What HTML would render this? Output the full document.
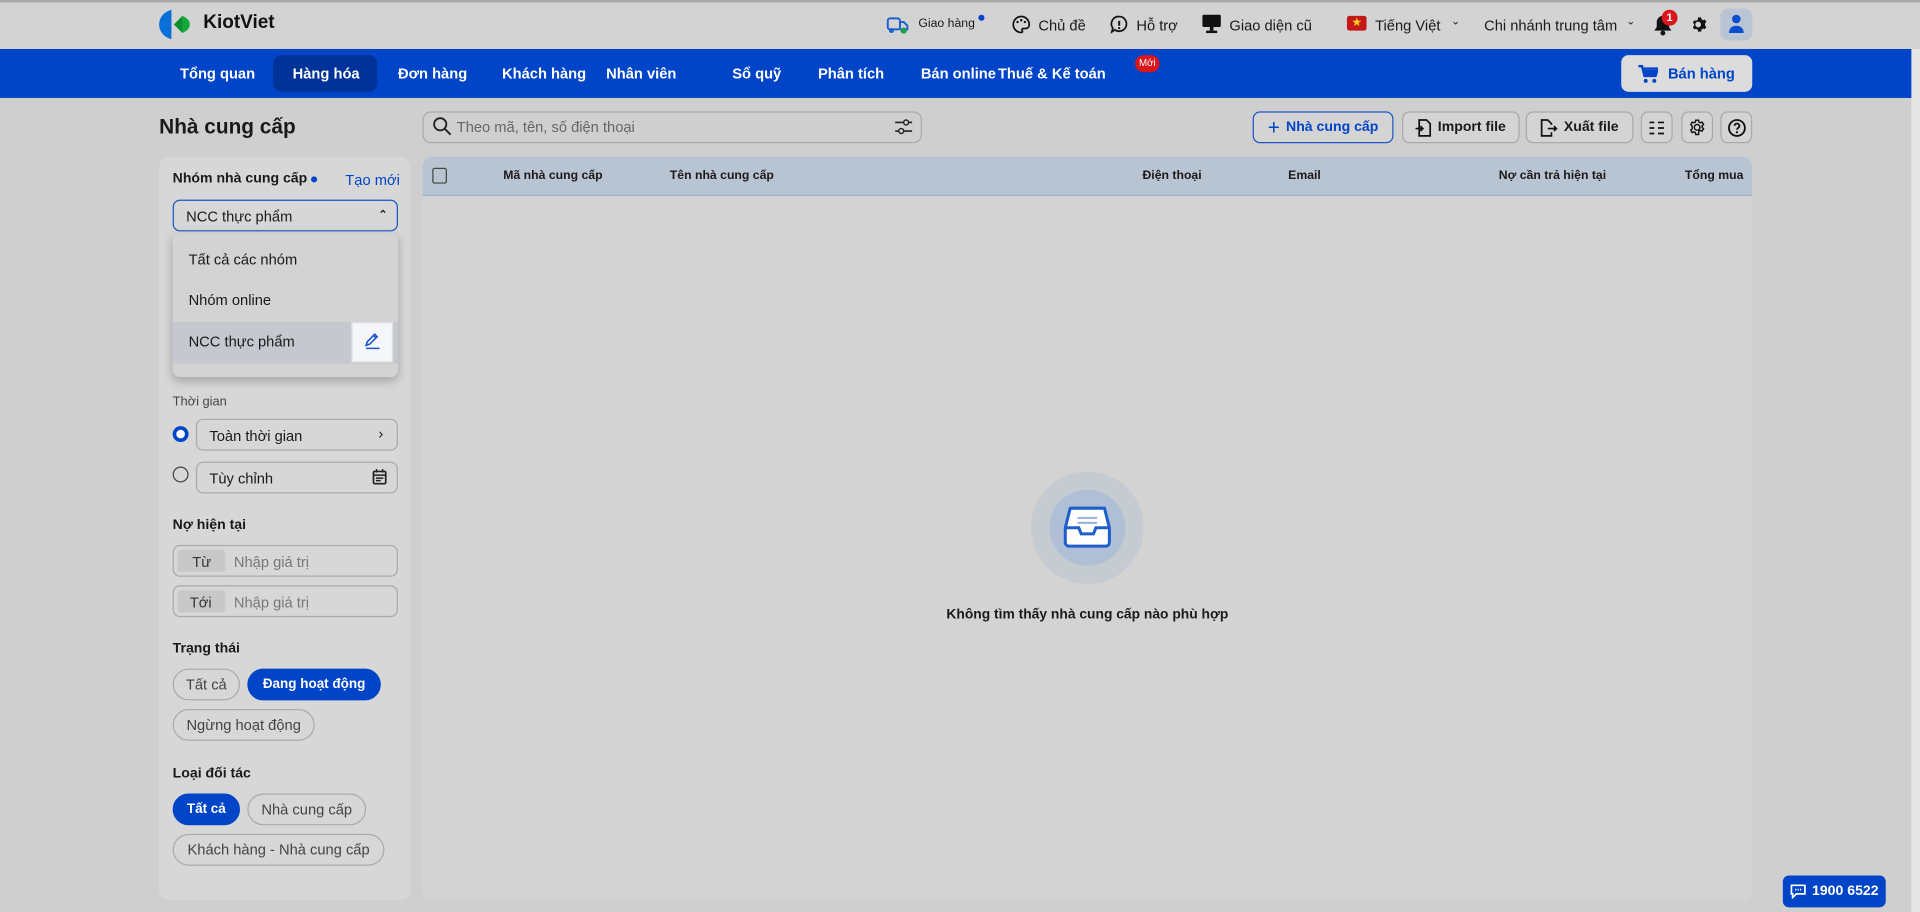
<!DOCTYPE html>
<html><head><meta charset="utf-8"><style>
*{box-sizing:border-box;margin:0;padding:0}
html,body{width:1920px;height:912px;overflow:hidden;background:#cfcfcf}
#w{position:absolute;left:0;top:0;width:1568px;height:745px;transform:scale(1.22449);transform-origin:0 0;font-family:"Liberation Sans","Noto Sans CJK SC",sans-serif;color:#1a1a1a;background:#cfcfcf}
.a{position:absolute}
.t{position:absolute;white-space:nowrap}
.nav{color:#fff;font-size:12px;font-weight:bold;top:53px}
.btn{position:absolute;top:91px;height:26px;border:1px solid #a9a9a9;border-radius:6px;background:#d4d4d4;font-size:11.5px;font-weight:bold;display:flex;align-items:center;justify-content:center;gap:5px}
.chip{position:absolute;height:26px;border:1px solid #aaa;border-radius:13px;font-size:12px;display:flex;align-items:center;justify-content:center;color:#444}
.chip.on{background:#0044c8;border-color:#0044c8;color:#fff;font-weight:bold;font-size:11px}
.box{position:absolute;left:141px;width:184px;height:26px;border:1px solid #aaa;border-radius:6px;font-size:12px}
.lbl{font-size:11.5px;font-weight:bold}
.th{position:absolute;top:138px;font-size:10px;font-weight:bold}
.tr{font-size:12px;top:14px}
</style></head><body><div id="w">
<div class="a" style="left:0;top:0;width:1568px;height:2px;background:#a8a8a8"></div>
<div class="a" style="left:0;top:2px;width:1568px;height:38px;background:#d3d3d3"></div>
<svg class="a" style="left:129px;top:7px" width="30" height="26" viewBox="0 0 30 26"><path d="M11 1C4 3 1 8 1 13s3 10 10 12z" fill="#0a6fd6"/><path d="M13 13l7-7v14z" fill="#0b8f2c"/><path d="M20 6c4 2 6 4 6 7s-2 5-6 7z" fill="#12a83a"/></svg>
<div class="t" style="left:166px;top:10px;font-size:15.5px;font-weight:bold;color:#111">KiotViet</div>
<svg class="a" style="left:724px;top:12px" width="18" height="16" viewBox="0 0 18 16"><rect x="1" y="3" width="10" height="9" rx="2" fill="none" stroke="#1c5fd0" stroke-width="1.6"/><path d="M11 6h3l3 3v3h-6" fill="none" stroke="#1c5fd0" stroke-width="1.6"/><circle cx="4" cy="13" r="2" fill="#1c5fd0"/><circle cx="14" cy="13" r="2.5" fill="#19a04a"/></svg>
<div class="t" style="left:750px;top:14px;font-size:10px">Giao hàng</div>
<div class="a" style="left:799px;top:12px;width:5px;height:5px;border-radius:50%;background:#0044c8"></div>
<svg class="a" style="left:826px;top:12px" width="16" height="16" viewBox="0 0 16 16"><path d="M8 1.5a6.5 6.5 0 100 13c1 0 1.3-.8.8-1.5-.5-.8 0-1.7 1-1.7H12a3 3 0 002.5-3A6.5 6.5 0 008 1.5z" fill="none" stroke="#111" stroke-width="1.4"/><circle cx="5" cy="6" r="1" fill="#111"/><circle cx="8" cy="4.5" r="1" fill="#111"/><circle cx="11" cy="6" r="1" fill="#111"/></svg>
<div class="t tr" style="left:848px">Chủ đề</div>
<svg class="a" style="left:906px;top:12px" width="16" height="16" viewBox="0 0 16 16"><path d="M8 1.5a6 6 0 11-3.5 10.9L2 14l.8-3A6 6 0 018 1.5z" fill="none" stroke="#111" stroke-width="1.4"/><path d="M8 5v4" stroke="#111" stroke-width="1.6"/><circle cx="8" cy="11" r=".9" fill="#111"/></svg>
<div class="t tr" style="left:928px">Hỗ trợ</div>
<svg class="a" style="left:981px;top:11px" width="17" height="17" viewBox="0 0 17 17"><rect x="1" y="1" width="15" height="10" rx="1" fill="#111"/><rect x="7" y="11" width="3" height="3" fill="#111"/><rect x="4" y="14" width="9" height="2" fill="#111"/></svg>
<div class="t tr" style="left:1004px">Giao diện cũ</div>
<div class="a" style="left:1100px;top:13px;width:16px;height:12px;border-radius:2px;background:#c41818;color:#f7d21b;font-size:8px;text-align:center;line-height:12px">★</div>
<div class="t tr" style="left:1123px">Tiếng Việt</div>
<div class="t" style="left:1185px;top:12px;font-size:9px">⌄</div>
<div class="t tr" style="left:1212px">Chi nhánh trung tâm</div>
<div class="t" style="left:1328px;top:12px;font-size:9px">⌄</div>
<svg class="a" style="left:1350px;top:11px" width="16" height="18" viewBox="0 0 16 18"><path d="M8 2a5 5 0 00-5 5v4l-2 3h14l-2-3V7a5 5 0 00-5-5z" fill="#111"/><circle cx="8" cy="16" r="2" fill="#111"/></svg>
<div class="a" style="left:1357px;top:8px;width:13px;height:13px;border-radius:50%;background:#d8161c;color:#fff;font-size:9px;font-weight:bold;text-align:center;line-height:13px">1</div>
<svg class="a" style="left:1381px;top:13px" width="14" height="14" viewBox="0 0 24 24"><path d="M12 8a4 4 0 100 8 4 4 0 000-8zm9.4 5.5l2 1.6-2 3.5-2.4-1a8 8 0 01-2.4 1.4L16.2 22h-4.4l-.4-2.6A8 8 0 019 18l-2.4 1-2.2-3.5 2-1.6a8 8 0 010-2.8l-2-1.6L6.6 6l2.4 1a8 8 0 012.4-1.4L11.8 2h4.4l.4 2.6a8 8 0 012.4 1.4l2.4-1 2.2 3.5-2 1.6a8 8 0 010 2.8z" fill="#111" transform="translate(-2 0)"/></svg>
<div class="a" style="left:1405px;top:7px;width:26px;height:26px;border-radius:6px;background:#b9c5d4"></div>
<svg class="a" style="left:1411px;top:11px" width="14" height="17" viewBox="0 0 14 17"><circle cx="7" cy="4.5" r="3.5" fill="#0b4fd0"/><path d="M1 16c0-4 2.5-6 6-6s6 2 6 6z" fill="#0b4fd0"/></svg>
<div class="a" style="left:0;top:40px;width:1561px;height:40px;background:#0044c8"></div>
<div class="a" style="left:1561px;top:40px;width:7px;height:705px;background:#e6e6e6"></div>
<div class="a" style="left:223px;top:45px;width:85px;height:30px;border-radius:7px;background:#00339a"></div>
<div class="t nav" style="left:147px">Tổng quan</div>
<div class="t nav" style="left:239px">Hàng hóa</div>
<div class="t nav" style="left:325px">Đơn hàng</div>
<div class="t nav" style="left:410px">Khách hàng</div>
<div class="t nav" style="left:495px">Nhân viên</div>
<div class="t nav" style="left:598px">Sổ quỹ</div>
<div class="t nav" style="left:668px">Phân tích</div>
<div class="t nav" style="left:752px">Bán online</div>
<div class="t nav" style="left:815px">Thuế &amp; Kế toán</div>
<div class="a" style="left:927px;top:45px;width:20px;height:14px;border-radius:7px;background:#d8161c;color:#fff;font-size:8px;text-align:center;line-height:14px">Mới</div>
<div class="a" style="left:1324px;top:45px;width:107px;height:30px;border-radius:6px;background:#dcdcdc;display:flex;align-items:center;justify-content:center;gap:8px;color:#0044c8;font-size:12px;font-weight:bold"><svg width="16" height="15" viewBox="0 0 16 15"><path d="M0 1h3l2 8h9l2-6H4.5" fill="none" stroke="#0044c8" stroke-width="2"/><rect x="4" y="4" width="11" height="5" fill="#0044c8"/><circle cx="6" cy="13" r="1.6" fill="#0044c8"/><circle cx="13" cy="13" r="1.6" fill="#0044c8"/></svg>Bán hàng</div>
<div class="t" style="left:130px;top:94px;font-size:17px;font-weight:bold">Nhà cung cấp</div>
<div class="a" style="left:345px;top:91px;width:408px;height:26px;border:1px solid #aaa;border-radius:7px"></div>
<svg class="a" style="left:353px;top:95px" width="16" height="16" viewBox="0 0 16 16"><circle cx="6.5" cy="6.5" r="5" fill="none" stroke="#222" stroke-width="1.5"/><path d="M10 10l5 5" stroke="#222" stroke-width="1.5"/></svg>
<div class="t" style="left:373px;top:97px;font-size:12px;color:#666">Theo mã, tên, số điện thoại</div>
<svg class="a" style="left:731px;top:97px" width="14" height="13" viewBox="0 0 14 13"><path d="M0 3h14M0 10h14" stroke="#222" stroke-width="1.3"/><circle cx="9" cy="3" r="2" fill="#d4d4d4" stroke="#222" stroke-width="1.2"/><circle cx="5" cy="10" r="2" fill="#d4d4d4" stroke="#222" stroke-width="1.2"/></svg>
<div class="btn" style="left:1023px;width:115px;border-color:#1c55c8;color:#0044c8"><span style="font-size:17px;font-weight:normal;line-height:1">+</span>Nhà cung cấp</div>
<div class="btn" style="left:1145px;width:96px"><svg width="13" height="15" viewBox="0 0 13 15"><path d="M3 1h6l3 3v10H3z" fill="none" stroke="#111" stroke-width="1.4"/><path d="M0 8h6M4 6l2 2-2 2" fill="none" stroke="#111" stroke-width="1.4"/></svg>Import file</div>
<div class="btn" style="left:1246px;width:88px"><svg width="14" height="15" viewBox="0 0 14 15"><path d="M9 5V4L6 1H1v13h8v-3" fill="none" stroke="#111" stroke-width="1.4"/><path d="M6 8h7M11 6l2 2-2 2" fill="none" stroke="#111" stroke-width="1.4"/></svg>Xuất file</div>
<div class="btn" style="left:1340px;width:26px"><svg width="12" height="11" viewBox="0 0 12 11"><path d="M0 1h4M0 5.5h4M0 10h4M7 1h5M7 5.5h5M7 10h5" stroke="#111" stroke-width="1.4"/></svg></div>
<div class="btn" style="left:1373px;width:26px"><svg width="14" height="14" viewBox="0 0 24 24"><path d="M12 8a4 4 0 100 8 4 4 0 000-8zM10 2h4l.5 2.6 2 1.1 2.5-1 2 3.4-2 1.7v2.4l2 1.7-2 3.4-2.5-1-2 1.1L14 22h-4l-.5-2.6-2-1.1-2.5 1-2-3.4 2-1.7V9.8l-2-1.7 2-3.4 2.5 1 2-1.1z" fill="none" stroke="#111" stroke-width="2"/></svg></div>
<div class="btn" style="left:1405px;width:26px"><svg width="15" height="15" viewBox="0 0 15 15"><circle cx="7.5" cy="7.5" r="6.5" fill="none" stroke="#111" stroke-width="1.5"/><path d="M5.5 5.8a2 2 0 114 .2c0 1.3-2 1.5-2 3" fill="none" stroke="#111" stroke-width="1.5"/><circle cx="7.5" cy="11" r=".9" fill="#111"/></svg></div>
<div class="a" style="left:130px;top:128px;width:205px;height:607px;border-radius:8px;background:#d7d7d7"></div>
<div class="t lbl" style="left:141px;top:140px">Nhóm nhà cung cấp</div>
<div class="a" style="left:254px;top:144px;width:5px;height:5px;border-radius:50%;background:#0044c8"></div>
<div class="t" style="left:282px;top:140px;font-size:12px;color:#0044c8">Tạo mới</div>
<div class="box" style="top:163px;border-color:#1c55c8"><span class="t" style="left:10px;top:6px">NCC thực phẩm</span><span class="t" style="left:167px;top:6px;font-size:9px;font-weight:bold">⌃</span></div>
<div class="a" style="left:141px;top:190px;width:184px;height:118px;border-radius:6px;background:#d3d3d3;box-shadow:0 3px 8px rgba(0,0,0,.25)"></div>
<div class="t" style="left:154px;top:205px;font-size:12px">Tất cả các nhóm</div>
<div class="t" style="left:154px;top:238px;font-size:12px">Nhóm online</div>
<div class="a" style="left:141px;top:263px;width:184px;height:34px;background:#c5c8ce"></div>
<div class="t" style="left:154px;top:272px;font-size:12px">NCC thực phẩm</div>
<div class="a" style="left:287px;top:263px;width:34px;height:33px;background:#f4f6fa;border:1px solid #e0e0e0"></div>
<svg class="a" style="left:297px;top:271px" width="14" height="15" viewBox="0 0 14 15"><path d="M2 11l1-3 6-6 2 2-6 6z M8 3l2 2" fill="none" stroke="#1c55c8" stroke-width="1.3"/><path d="M2 13.5h11" stroke="#1c55c8" stroke-width="1.2"/></svg>
<div class="t" style="left:141px;top:322px;font-size:10.5px;color:#444">Thời gian</div>
<div class="a" style="left:141px;top:348px;width:13px;height:13px;border-radius:50%;border:3.5px solid #0044c8;background:#fff"></div>
<div class="box" style="left:160px;width:165px;top:342px"><span class="t" style="left:10px;top:6px">Toàn thời gian</span><span class="t" style="left:148px;top:4px">›</span></div>
<div class="a" style="left:141px;top:381px;width:13px;height:13px;border-radius:50%;border:1px solid #444"></div>
<div class="box" style="left:160px;width:165px;top:377px"><span class="t" style="left:10px;top:6px">Tùy chỉnh</span></div>
<svg class="a" style="left:304px;top:383px" width="12" height="13" viewBox="0 0 12 13"><rect x="1" y="2" width="10" height="10" rx="1" fill="none" stroke="#222" stroke-width="1.4"/><path d="M1 5h10M3.5 0v3M8.5 0v3M3 7.5h6M3 9.5h4" stroke="#222" stroke-width="1.2"/></svg>
<div class="t lbl" style="left:141px;top:423px">Nợ hiện tại</div>
<div class="box" style="top:445px"><div class="a" style="left:3px;top:3px;width:39px;height:18px;background:#c8c8c8;border-radius:2px"></div><span class="t" style="left:15px;top:6px;color:#333">Từ</span><span class="t" style="left:49px;top:6px;color:#777">Nhập giá trị</span></div>
<div class="box" style="top:478px"><div class="a" style="left:3px;top:3px;width:39px;height:18px;background:#c8c8c8;border-radius:2px"></div><span class="t" style="left:13px;top:6px;color:#333">Tới</span><span class="t" style="left:49px;top:6px;color:#777">Nhập giá trị</span></div>
<div class="t lbl" style="left:141px;top:524px">Trạng thái</div>
<div class="chip" style="left:141px;top:546px;width:55px">Tất cả</div>
<div class="chip on" style="left:202px;top:546px;width:109px">Đang hoạt động</div>
<div class="chip" style="left:141px;top:579px;width:116px">Ngừng hoạt động</div>
<div class="t lbl" style="left:141px;top:626px">Loại đối tác</div>
<div class="chip on" style="left:141px;top:648px;width:55px">Tất cả</div>
<div class="chip" style="left:202px;top:648px;width:97px">Nhà cung cấp</div>
<div class="chip" style="left:141px;top:681px;width:173px">Khách hàng - Nhà cung cấp</div>
<div class="a" style="left:345px;top:128px;width:1086px;height:607px;border-radius:8px;background:#d3d3d3;overflow:hidden"><div class="a" style="left:0;top:0;width:1086px;height:32px;background:#b8c4d2;border-bottom:1px solid #9fb3cf"></div></div>
<div class="a" style="left:353px;top:137px;width:12px;height:13px;border:1.3px solid #444;border-radius:2px"></div>
<div class="th" style="left:411px">Mã nhà cung cấp</div>
<div class="th" style="left:547px">Tên nhà cung cấp</div>
<div class="th" style="left:933px">Điện thoại</div>
<div class="th" style="left:1052px">Email</div>
<div class="th" style="left:1224px">Nợ cần trả hiện tại</div>
<div class="th" style="left:1376px">Tổng mua</div>
<div class="a" style="left:842px;top:385px;width:92px;height:92px;border-radius:50%;background:#c6cad1"></div>
<div class="a" style="left:857px;top:400px;width:62px;height:62px;border-radius:50%;background:#afbfd6"></div>
<svg class="a" style="left:868px;top:411px" width="40" height="38" viewBox="0 0 40 38"><path d="M6 4h28l4 16v12a3 3 0 01-3 3H5a3 3 0 01-3-3V20z" fill="#fff" stroke="#1f5fcc" stroke-width="2.5" stroke-linejoin="round"/><path d="M2 20h11l2 5h10l2-5h11" fill="none" stroke="#1f5fcc" stroke-width="2.5"/><path d="M12 12h16M12 16h16" stroke="#9fb6dc" stroke-width="1.8"/></svg>
<div class="t" style="left:888px;top:496px;transform:translateX(-50%);font-size:11.3px;font-weight:bold">Không tìm thấy nhà cung cấp nào phù hợp</div>
<div class="a" style="left:1456px;top:715px;width:84px;height:26px;border-radius:5px;background:#0044c8;color:#fff;font-size:11.5px;font-weight:bold;display:flex;align-items:center;justify-content:center;gap:5px"><svg width="13" height="12" viewBox="0 0 13 12"><path d="M1 1h11v7H5l-3 3V8H1z" fill="none" stroke="#fff" stroke-width="1.4"/><path d="M4 4.5h1M6 4.5h1M8 4.5h1" stroke="#fff" stroke-width="1.4"/></svg>1900 6522</div>
</div></body></html>
